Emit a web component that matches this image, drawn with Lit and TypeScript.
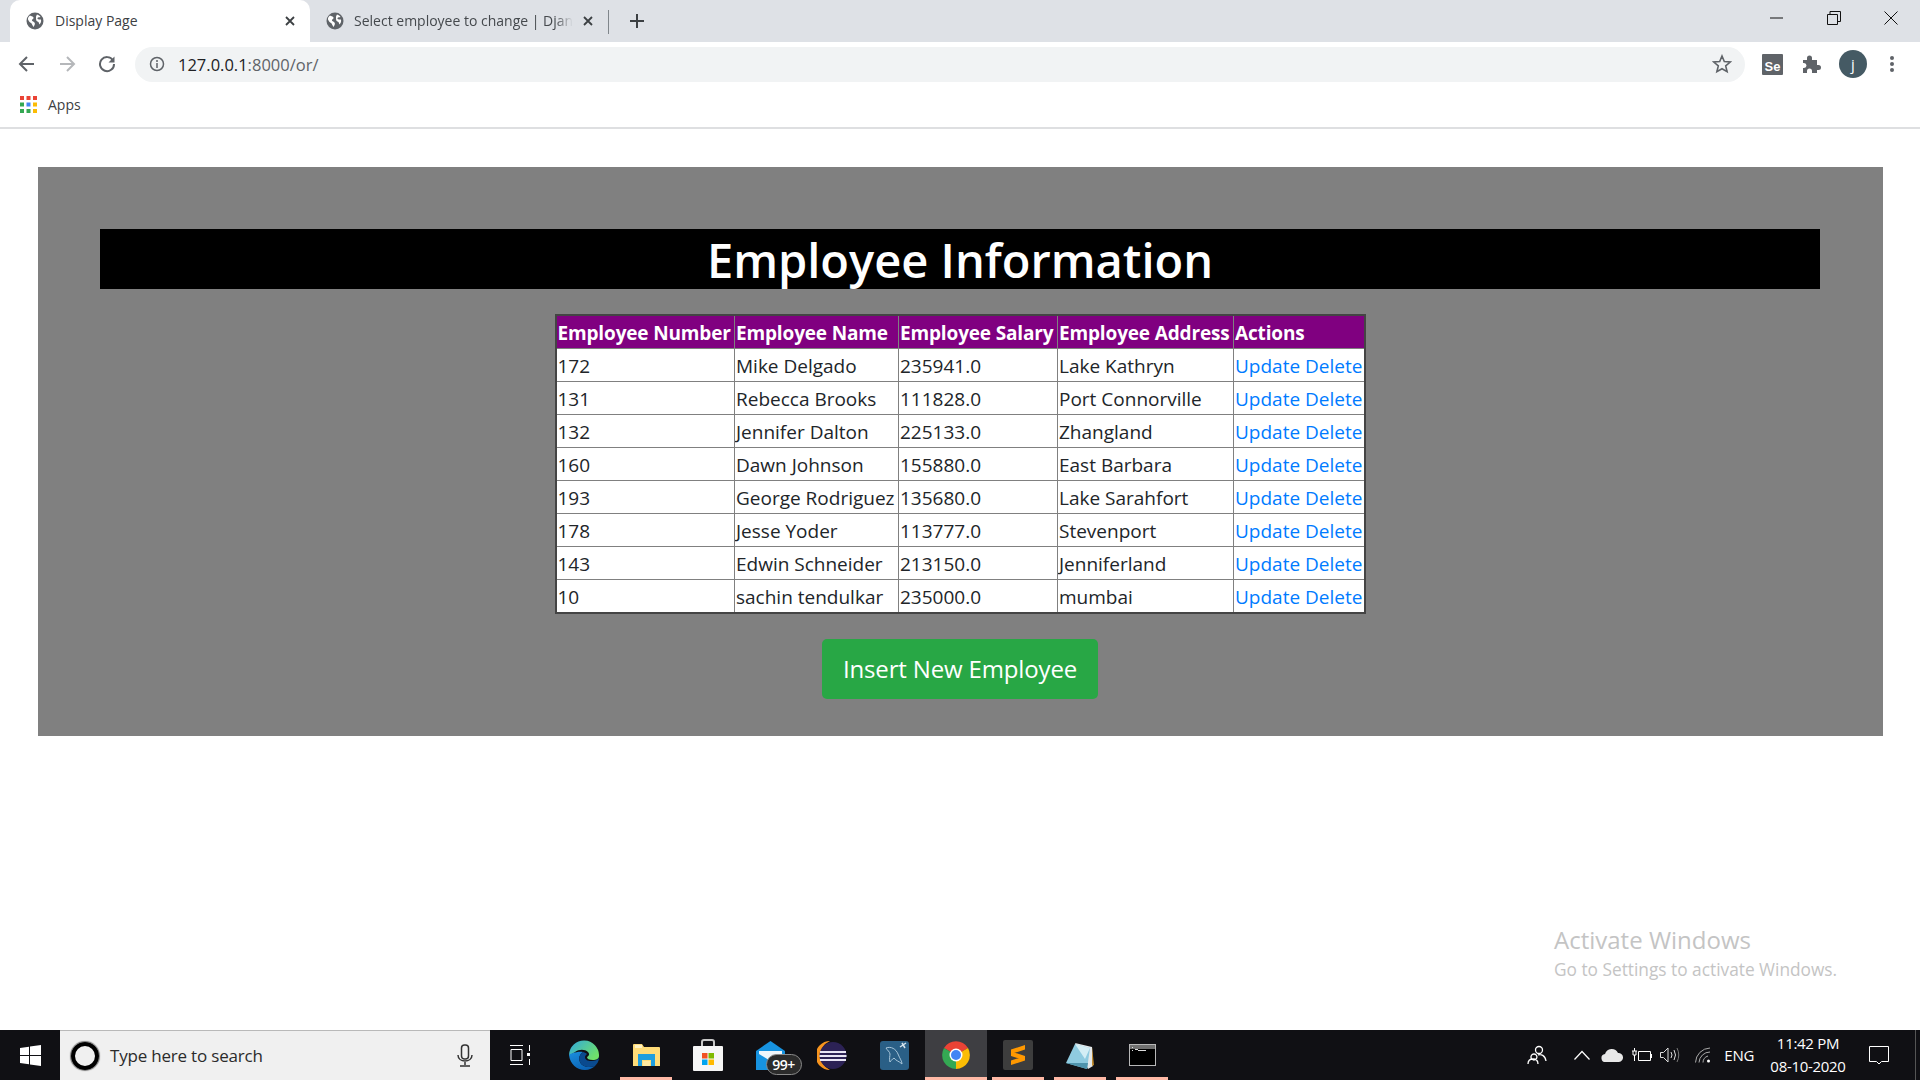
import { LitElement, html, css, svg } from "lit";
import { customElement } from "lit/decorators.js";

const employees = [
  ["172", "Mike Delgado", "235941.0", "Lake Kathryn"],
  ["131", "Rebecca Brooks", "111828.0", "Port Connorville"],
  ["132", "Jennifer Dalton", "225133.0", "Zhangland"],
  ["160", "Dawn Johnson", "155880.0", "East Barbara"],
  ["193", "George Rodriguez", "135680.0", "Lake Sarahfort"],
  ["178", "Jesse Yoder", "113777.0", "Stevenport"],
  ["143", "Edwin Schneider", "213150.0", "Jenniferland"],
  ["10", "sachin tendulkar", "235000.0", "mumbai"],
];

const globe = html`<svg width="18" height="18" viewBox="0 0 18 18">
  <circle cx="9" cy="9" r="8.5" fill="#5f6368" />
  <path d="M4 3.500c1 .5 3 1 3.500 2s-1 1.500-1.500 2.500 1.500 1.500 2.500 2.500 0 3-1 4.500C6 13 6 11.500 5 11S2.500 9 2 7.500 3 4.500 4 3.500zM11 2.500c1.500.5 3 1.500 3.500 2.500-1 .5-2.500 0-3 1s1 1.500 3.500 1.500c.5 2-.5 4-1.500 5-.5-1-.5-2.500-2-3S10 7 10 5.500s.5-2 1-3z" fill="#fff" />
</svg>`;

const closeIcon = html`<svg width="10" height="10" viewBox="0 0 10 10">
  <path d="M1 1l8 8M9 1L1 9" stroke="#3c4043" stroke-width="1.800" />
</svg>`;

const appsGrid = svg`${[0, 1, 2].flatMap((r) =>
  [0, 1, 2].map(
    (c) =>
      svg`<rect x=${c * 6.5} y=${r * 6.5} width="4" height="4" fill=${
        [
          ["#ea4335", "#ea4335", "#ea4335"],
          ["#34a853", "#4285f4", "#fbbc05"],
          ["#34a853", "#34a853", "#fbbc05"],
        ][r][c]
      } />`
  )
)}`;

const taskApps = [
  {
    open: false,
    icon: html`<svg width="30" height="30" viewBox="0 0 30 30">
      <defs>
        <linearGradient id="edge" x1="0" y1="0" x2="1" y2="0.6"><stop offset="0" stop-color="#2fa8e0" /><stop offset="1" stop-color="#6fe06a" /></linearGradient>
        <linearGradient id="edgeLow" x1="0" y1="0" x2="0.6" y2="1"><stop offset="0" stop-color="#1a8fe0" /><stop offset="1" stop-color="#0b62b3" /></linearGradient>
      </defs>
      <path d="M0 15a15 15 0 0 1 30 1c0 3-3 4-6 4-4 0-6-1-6-3 2-1 3-3 1-5-3-3-9-3-13 0-3 2-5 3-6 3z" fill="url(#edge)" />
      <path d="M0 15c1 9 8 15 16 15 4 0 8-2 10-4-6 2-13 1-15-4-2-4 0-8 3-10-6-1-13 2-14 3z" fill="url(#edgeLow)" />
      <path d="M14 12c-3 2-5 6-3 10 2 5 9 6 15 4 2-2 4-5 4-8-1 2-4 3-8 3-3 0-6-1-6-4 0-1 1-2 2-3-1-1-3-2-4-2z" fill="#0a4a8e" />
    </svg>`,
  },
  {
    open: true,
    icon: html`<svg width="27" height="22" viewBox="0 0 27 22">
      <path d="M0 1q0-1 1-1h8l2 3h15q1 0 1 1v18H0z" fill="#ffdc78" />
      <path d="M2 1h7v3H2z" fill="#fff3c4" />
      <path d="M5 22V10h17v12h-4v-6H9v6z" fill="#1f9ede" />
      <path d="M10 17h7v5h-7z" fill="#ffe9a0" />
    </svg>`,
  },
  {
    open: false,
    icon: html`<svg width="30" height="32" viewBox="0 0 30 32">
      <path d="M9 8V3q0-2 2-2h8q2 0 2 2v5" fill="none" stroke="#c8c8c8" stroke-width="2" />
      <rect y="7" width="30" height="25" rx="1" fill="#f6f6f6" />
      <rect x="9" y="14" width="5.500" height="5.500" fill="#f25022" />
      <rect x="15.500" y="14" width="5.500" height="5.500" fill="#7fba00" />
      <rect x="9" y="20.500" width="5.500" height="5.500" fill="#00a4ef" />
      <rect x="15.500" y="20.500" width="5.500" height="5.500" fill="#ffb900" />
    </svg>`,
  },
  {
    open: false,
    icon: html`<span class="mail">
      <svg width="29" height="29" viewBox="0 0 29 29">
        <path d="M0 10L14.500 0 29 10v19H0z" fill="#1793e0" />
        <path d="M3 10h23v3L14.500 20 3 13z" fill="#f0f6fb" />
      </svg>
      <span class="badge">99+</span>
    </span>`,
  },
  {
    open: false,
    icon: html`<svg width="30" height="29" viewBox="0 0 30 29">
      <path d="M13 0A14.500 14.500 0 0 0 13 29 16 16 0 0 1 13 0z" fill="#f7941e" />
      <circle cx="16" cy="14.500" r="13.500" fill="#2c2255" />
      <path d="M3 10h26v2H3zM2.500 14h27v2h-27zM3 18h26v2H3z" fill="#e9e6f5" />
    </svg>`,
  },
  {
    open: false,
    icon: html`<svg width="29" height="29" viewBox="0 0 29 29">
      <rect width="29" height="29" rx="3" fill="#2a5f86" />
      <path d="M6 7c5-2 10 1 12 6s4 7 4 10c-3-3-6-3-8-6-2 2-3 2-4 4-1-3 0-6 0-8S7 9 6 7z" fill="none" stroke="#a9c6da" stroke-width="1" />
      <path d="M20 6l6-4M22 2l3 5" stroke="#d5e3ec" stroke-width="1.500" />
    </svg>`,
  },
  {
    open: true,
    active: true,
    icon: html`<svg width="28" height="28" viewBox="0 0 28 28">
      <path d="M14 14L2 7A14 14 0 0 1 26 7z" fill="#ea4335" />
      <path d="M14 14L26 7A14 14 0 0 1 14 28z" fill="#fbbc05" />
      <path d="M14 14L14 28A14 14 0 0 1 2 7z" fill="#34a853" />
      <circle cx="14" cy="14" r="6.500" fill="#fff" />
      <circle cx="14" cy="14" r="5" fill="#4285f4" />
    </svg>`,
  },
  {
    open: true,
    icon: html`<svg width="30" height="30" viewBox="0 0 30 30">
      <rect width="30" height="30" rx="2" fill="#3d3d3d" />
      <path d="M8 9.500L22 5v4.500L8 14zM8 11.500l14 4.500v4.500L8 16zM8 20.500L22 16v4.500L8 25z" fill="#ff9800" />
    </svg>`,
  },
  {
    open: true,
    icon: html`<svg width="28" height="27" viewBox="0 0 28 27">
      <path d="M9 1l17 4 1 19-5 3z" fill="#e4e8ea" />
      <path d="M26 5l2 18-2 1z" fill="#c08a2e" />
      <path d="M9 2l15 4-3 21L0 21z" fill="#8fcbe0" />
      <path d="M9 2l15 4-5 11z" fill="#d4eef5" />
      <path d="M0 21l21 6 1-6z" fill="#4f94ad" />
    </svg>`,
  },
  {
    open: true,
    icon: html`<svg width="27" height="22" viewBox="0 0 27 22">
      <rect width="27" height="22" fill="#b8b8b8" />
      <rect x="1" y="1" width="25" height="4" fill="#707070" />
      <rect x="1" y="5" width="25" height="16" fill="#000" />
      <path d="M3 3h1v1H3zM3 6h1v1H3zM6 5h3v1H6zM9 6h8v1H9z" fill="#ddd" />
    </svg>`,
  },
];

@customElement("app-root")
export class AppRoot extends LitElement {
  static styles = css`
    :host {
      display: flex;
      flex-direction: column;
      position: relative;
      width: 1920px;
      height: 1080px;
      overflow: hidden;
      background: #fff;
      font-family: "Open Sans", "Noto Sans", sans-serif;
      color: #212529;
    }

    svg {
      display: block;
      flex: none;
    }

    .tabstrip {
      display: flex;
      align-items: flex-end;
      height: 42px;
      padding-left: 10px;
      background: #dee1e6;
    }

    .tab {
      display: flex;
      align-items: center;
      gap: 10px;
      height: 42px;
      padding: 0 15px 0 16px;
      box-sizing: border-box;
      font-size: 14px;
      color: #3c4043;
    }

    .tab.active {
      width: 300px;
      background: #fff;
      border-radius: 10px 10px 0 0;
    }

    .tab.active .tab-title {
      margin-left: 1px;
    }

    .tab.other {
      width: 298px;
      color: #45494d;
    }

    .tab-title {
      flex: 1;
      padding-bottom: 2px;
      white-space: nowrap;
    }

    .other .tab-title {
      -webkit-mask-image: linear-gradient(to left, transparent, #000 18px);
      mask-image: linear-gradient(to left, transparent, #000 18px);
    }

    .divider {
      width: 1px;
      height: 24px;
      margin-bottom: 8px;
      background: #80868b;
    }

    .new-tab {
      display: flex;
      align-items: center;
      justify-content: center;
      width: 55px;
      height: 42px;
    }

    .window-buttons {
      display: flex;
      align-items: center;
      margin-left: auto;
      height: 36px;
      align-self: flex-start;
      padding-right: 1px;
    }

    .window-buttons span {
      display: flex;
      justify-content: center;
      width: 57px;
    }

    .toolbar {
      display: flex;
      align-items: center;
      height: 43px;
      padding: 1px 15px 0 18px;
      box-sizing: border-box;
    }

    .nav {
      display: flex;
      gap: 22px;
      margin-right: 19px;
    }

    .omnibox {
      display: flex;
      align-items: center;
      width: 1610px;
      height: 35px;
      padding: 0 13px 0 14px;
      box-sizing: border-box;
      border-radius: 18px;
      background: #f1f3f4;
      font-size: 16.5px;
      color: #5f6368;
    }

    .omnibox b {
      font-weight: 400;
      color: #202124;
    }

    .url {
      margin-left: 13px;
      flex: 1;
    }

    .tools {
      display: flex;
      align-items: center;
      margin-left: 17px;
      gap: 18px;
    }

    .avatar {
      display: flex;
      align-items: center;
      justify-content: center;
      width: 28px;
      height: 28px;
      border-radius: 50%;
      background: #455a64;
      color: #fff;
      font-size: 15px;
    }

    .se {
      display: flex;
      align-items: flex-end;
      justify-content: center;
      width: 21px;
      height: 21px;
      border-radius: 1px;
      background: #5f6368;
      color: #fff;
      font: 700 13px/16px "Liberation Sans", sans-serif;
    }

    .dots {
      margin-left: 5px;
    }

    .bookmarks {
      display: flex;
      align-items: center;
      gap: 11px;
      height: 38px;
      padding: 0 0 4px 20px;
      border-bottom: 2px solid #dedfe1;
      font-size: 14px;
      color: #3c4043;
    }

    main {
      flex: 1;
      padding: 38px 37px 0 38px;
    }

    .panel {
      display: flex;
      flex-direction: column;
      align-items: center;
      height: 569px;
      padding: 62px 63px 0 62px;
      box-sizing: border-box;
      background: #808080;
    }

    h1 {
      align-self: stretch;
      height: 60px;
      margin: 0;
      background: #000;
      color: #fff;
      text-align: center;
      font-size: 47px;
      font-weight: 600;
      line-height: 62px;
    }

    table {
      width: 811px;
      margin-top: 25px;
      table-layout: fixed;
      border-collapse: collapse;
      border: 2px solid #444;
      background: #fff;
      font-size: 19px;
    }

    th,
    td {
      box-sizing: border-box;
      height: 33px;
      padding: 2px 1px 0;
      border: 1px solid #808080;
      text-align: left;
      white-space: nowrap;
      overflow: hidden;
    }

    th {
      background: #800080;
      color: #fff;
      font-weight: 700;
      letter-spacing: -0.15px;
    }

    .c1 { width: 179px; }
    .c2 { width: 164px; }
    .c3 { width: 159px; }
    .c4 { width: 176px; }

    tbody tr:last-child td {
      height: 34px;
    }

    a {
      color: #007bff;
      text-decoration: none;
    }

    .insert {
      display: flex;
      align-items: center;
      justify-content: center;
      width: 276px;
      height: 60px;
      margin-top: 25px;
      padding-bottom: 1px;
      box-sizing: border-box;
      border-radius: 5px;
      background: #28a745;
      color: #fff;
      font-size: 24px;
      letter-spacing: -0.15px;
    }

    .watermark {
      position: absolute;
      left: 1554px;
      top: 924px;
      color: #c4c4c4;
      font-size: 17.3px;
    }

    .watermark div:first-child {
      font-size: 24px;
      line-height: 32px;
    }

    .watermark div:last-child {
      margin-top: 3px;
      line-height: 22px;
    }

    .taskbar {
      display: flex;
      align-items: stretch;
      height: 50px;
      background: #101014;
      color: #fff;
    }

    .start {
      display: flex;
      align-items: center;
      justify-content: center;
      width: 60px;
    }

    .search {
      display: flex;
      align-items: center;
      width: 430px;
      padding: 0 17px 0 11px;
      box-sizing: border-box;
      background: #f0f0f0;
      border-top: 1px solid #b9b9b9;
      color: #2b2b2b;
      font-size: 17px;
      letter-spacing: -0.2px;
    }

    .ring {
      width: 20px;
      height: 20px;
      margin-right: 11px;
      border: 4px solid #000;
      border-radius: 50%;
      box-shadow: 0 0 1px 1px #777;
    }

    .search span {
      flex: 1;
    }

    .task-view {
      display: flex;
      align-items: center;
      justify-content: center;
      width: 63px;
      padding-right: 3px;
      box-sizing: border-box;
    }

    .apps {
      display: flex;
    }

    .app {
      position: relative;
      display: flex;
      align-items: center;
      justify-content: center;
      width: 62px;
    }

    .app.open::after {
      content: "";
      position: absolute;
      left: 5px;
      right: 5px;
      bottom: 0;
      height: 3px;
      background: #ffb9a6;
    }

    .app.active {
      background: #3e3e42;
    }

    .app.active::after {
      left: 0;
      right: 0;
    }

    .mail {
      position: relative;
      display: block;
    }

    .badge {
      position: absolute;
      left: 10px;
      top: 13px;
      width: 34px;
      height: 19px;
      border: 1px solid #8a8a8a;
      border-radius: 11px;
      background: #2b2b2b;
      text-align: center;
      font-size: 14px;
      font-weight: 600;
      line-height: 19px;
      letter-spacing: -0.5px;
    }

    .tray {
      display: flex;
      align-items: center;
      margin-left: auto;
      font-size: 15px;
      letter-spacing: -0.3px;
    }

    .people { margin-right: 27px; }
    .chevron { margin-right: 11px; }
    .cloud { margin-right: 9px; }
    .battery { margin-right: 8px; }
    .speaker { margin-right: 15px; }
    .wifi { margin-right: 13px; }

    .lang {
      margin-right: 8px;
    }

    .clock {
      width: 92px;
      text-align: center;
      line-height: 23px;
    }

    .notify {
      margin: 0 26px 0 15px;
    }

    .edge-line {
      align-self: stretch;
      width: 1px;
      margin-right: 4px;
      background: #555;
    }
  `;

  render() {
    return html`
      ${this.renderBrowser()}
      <main>
        <div class="panel">
          <h1>Employee Information</h1>
          <table>
            <thead>
              <tr>
                <th class="c1">Employee Number</th>
                <th class="c2">Employee Name</th>
                <th class="c3">Employee Salary</th>
                <th class="c4">Employee Address</th>
                <th>Actions</th>
              </tr>
            </thead>
            <tbody>
              ${employees.map(
                (e) => html`<tr>
                  ${e.map((v) => html`<td>${v}</td>`)}
                  <td><a href="#">Update</a> <a href="#">Delete</a></td>
                </tr>`
              )}
            </tbody>
          </table>
          <div class="insert">Insert New Employee</div>
        </div>
      </main>
      <div class="watermark">
        <div>Activate Windows</div>
        <div>Go to Settings to activate Windows.</div>
      </div>
      ${this.renderTaskbar()}
    `;
  }

  renderBrowser() {
    return html`
      <div class="tabstrip">
        <div class="tab active">
          ${globe}
          <span class="tab-title">Display Page</span>
          ${closeIcon}
        </div>
        <div class="tab other">
          ${globe}
          <span class="tab-title">Select employee to change | Djan</span>
          ${closeIcon}
        </div>
        <div class="divider"></div>
        <div class="new-tab">
          <svg width="16" height="16" viewBox="0 0 16 16"><path d="M8 1v14M1 8h14" stroke="#3c4043" stroke-width="2" /></svg>
        </div>
        <div class="window-buttons">
          <span><svg width="14" height="14" viewBox="0 0 14 14"><path d="M0 7h13" stroke="#111" /></svg></span>
          <span><svg width="14" height="14" viewBox="0 0 14 14"><path d="M.5 3.500h10v10H.5zM3 3.500V.5h10.500v10H10.500" fill="none" stroke="#111" /></svg></span>
          <span><svg width="14" height="14" viewBox="0 0 14 14"><path d="M.5.5l13 13M13.500.5l-13 13" stroke="#111" /></svg></span>
        </div>
      </div>
      <div class="toolbar">
        <div class="nav">
          <svg width="18" height="18" viewBox="0 0 18 18"><path d="M16 9H3M9 2L2 9l7 7" fill="none" stroke="#5f6368" stroke-width="2" /></svg>
          <svg width="18" height="18" viewBox="0 0 18 18"><path d="M2 9h13M9 2l7 7-7 7" fill="none" stroke="#b5b7ba" stroke-width="2" /></svg>
          <svg width="18" height="18" viewBox="0 0 18 18"><path d="M15 5.500A7 7 0 1 0 16 9" fill="none" stroke="#5f6368" stroke-width="2" /><path d="M16.500 1.500v6h-6z" fill="#5f6368" /></svg>
        </div>
        <div class="omnibox">
          <svg width="16" height="16" viewBox="0 0 16 16"><circle cx="8" cy="8" r="6.500" fill="none" stroke="#5f6368" stroke-width="1.500" /><path d="M8 7v5M8 4v2" stroke="#5f6368" stroke-width="1.500" /></svg>
          <span class="url"><b>127.0.0.1</b>:8000/or/</span>
          <svg width="20" height="20" viewBox="0 0 20 20"><path d="M10 2l2.300 5.500 6 .5-4.600 3.900 1.400 5.800L10 14.700l-5.100 3 1.400-5.800L1.700 8l6-.5z" fill="none" stroke="#5f6368" stroke-width="1.600" /></svg>
        </div>
        <div class="tools">
          <div class="se">Se</div>
          <svg width="20" height="20" viewBox="0 0 20 20"><path d="M2 6h4V4a2.500 2.500 0 0 1 5 0v2h5v5h1.500a2.500 2.500 0 0 1 0 5H16v3h-5v-2a2.500 2.500 0 0 0-5 0v2H2v-5h1a2.500 2.500 0 0 0 0-5H2z" fill="#5f6368" /></svg>
          <div class="avatar">j</div>
          <svg class="dots" width="4" height="18" viewBox="0 0 4 18"><circle cx="2" cy="3" r="2" fill="#5f6368" /><circle cx="2" cy="9" r="2" fill="#5f6368" /><circle cx="2" cy="15" r="2" fill="#5f6368" /></svg>
        </div>
      </div>
      <div class="bookmarks">
        <svg width="17" height="17" viewBox="0 0 17 17">${appsGrid}</svg>
        <span>Apps</span>
      </div>
    `;
  }

  renderTaskbar() {
    return html`
      <div class="taskbar">
        <div class="start">
          <svg width="21" height="21" viewBox="0 0 21 21"><path d="M0 3l9-1.300V10H0zM10 1.500L21 0v10H10zM0 11h9v8.300L0 18zM10 11h11v10l-11-1.500z" fill="#fff" /></svg>
        </div>
        <div class="search">
          <div class="ring"></div>
          <span>Type here to search</span>
          <svg width="16" height="24" viewBox="0 0 16 24"><rect x="4.500" y="1" width="7" height="14" rx="3" fill="none" stroke="#333" stroke-width="1.500" /><path d="M1 11c0 8 14 8 14 0M8 18v3M3 22h10" fill="none" stroke="#333" stroke-width="1.500" /></svg>
        </div>
        <div class="task-view">
          <svg width="20" height="20" viewBox="0 0 20 20"><path d="M0 .5h13M0 19.500h13M1 4.500h11v11H1zM19.500 0v6M19.500 14v6" fill="none" stroke="#fff" /><rect x="17" y="8" width="3" height="3" fill="#fff" /></svg>
        </div>
        <div class="apps">
          ${taskApps.map(
            (a) => html`<div class="app ${a.open ? "open" : ""} ${a.active ? "active" : ""}">${a.icon}</div>`
          )}
        </div>
        <div class="tray">
          <svg class="people" width="20" height="20" viewBox="0 0 20 20"><path d="M12 1.500a3.500 3.500 0 1 1 0 7 3.500 3.500 0 0 1 0-7zM7 9a3 3 0 1 1-.1 0zM1 19c0-4 2-5 5-5s5 1 5 5M11 10c3-1 7 0 8 6" fill="none" stroke="#fff" stroke-width="1.300" /></svg>
          <svg class="chevron" width="16" height="10" viewBox="0 0 16 10"><path d="M.5 9.500L8 1.500l7.500 8" fill="none" stroke="#fff" stroke-width="1.200" /></svg>
          <svg class="cloud" width="22" height="14" viewBox="0 0 22 14"><path d="M5 14a4 4 0 0 1-1-8 7 7 0 0 1 13-1 4.500 4.500 0 0 1 1 9z" fill="#e8e8e8" /></svg>
          <svg class="battery" width="20" height="14" viewBox="0 0 20 14"><path d="M6.500 3.500h12v9h-12zM19.500 6v4M0 3h5M2.500 0v3M1 3v4h3V3M2.500 7v6" fill="none" stroke="#fff" /></svg>
          <svg class="speaker" width="20" height="16" viewBox="0 0 20 16"><path d="M.5 5.500h3L8 1v14l-4.500-4.500h-3zM11 5q2 3 0 6M14 3q3 5 0 10" fill="none" stroke="#ddd" /><path d="M17 1q3.500 7 0 14" fill="none" stroke="#777" /></svg>
          <svg class="wifi" width="16" height="16" viewBox="0 0 16 16"><path d="M.5 15.500A15 15 0 0 1 15 1M4 15.500A11 11 0 0 1 15 5M8 15.500A7 7 0 0 1 13 9" fill="none" stroke="#aaa" /><circle cx="13.500" cy="14" r="1.500" fill="#fff" /></svg>
          <span class="lang">ENG</span>
          <div class="clock">
            <div>11:42 PM</div>
            <div>08-10-2020</div>
          </div>
          <svg class="notify" width="20" height="20" viewBox="0 0 20 20"><path d="M.5 1.500h19v15h-7L10 19l-2.500-2.500h-7z" fill="none" stroke="#fff" /></svg>
          <div class="edge-line"></div>
        </div>
      </div>
    `;
  }
}
